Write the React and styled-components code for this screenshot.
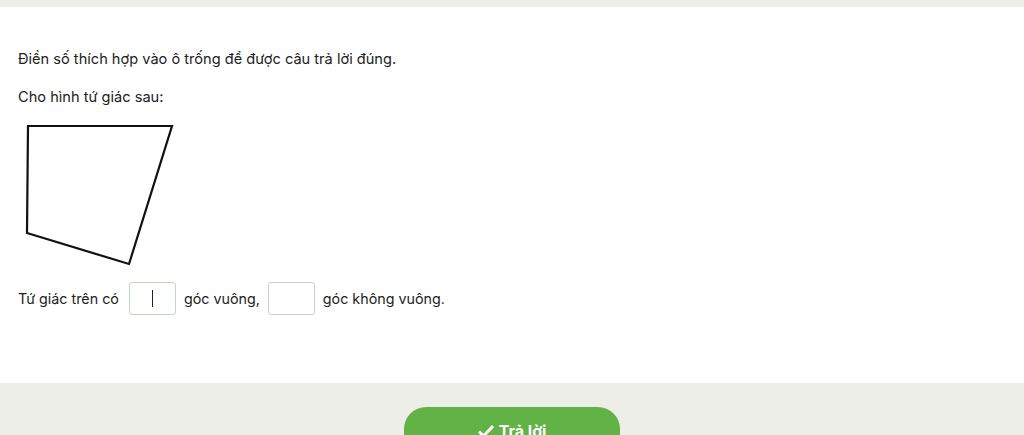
import React from "react";
import styled, { createGlobalStyle } from "styled-components";

const Global = createGlobalStyle`
  html, body {
    margin: 0;
    padding: 0;
    background: #eeeee8;
    font-family: Inter, "Noto Sans", Arial, sans-serif;
    color: #222;
  }
`;

const Page = styled.div`
  width: 1024px;
  height: 435px;
  overflow: hidden;
  padding-top: 7px;
  box-sizing: border-box;
`;

const Panel = styled.div`
  background: #fff;
  height: 376px;
  box-sizing: border-box;
  padding: 42px 18px 0;
`;

const Line = styled.p`
  margin: 0 0 ${(p) => p.gap || 0}px;
  font-size: 14.6px;
  line-height: 20px;
`;

const Figure = styled.svg`
  display: block;
  margin: 0 0 13px 7px;
`;

const AnswerRow = styled.div`
  display: flex;
  align-items: center;
  gap: 8px;
  font-size: 14.3px;
`;

const Lead = styled.span`
  margin-right: 2px;
`;

const Blank = styled.div`
  width: 47px;
  height: 33px;
  box-sizing: border-box;
  border: 1px solid ${(p) => (p.active ? "#b9d9c0" : "#cfcfcf")};
  border-radius: 3px;
  display: flex;
  align-items: center;
  justify-content: center;
`;

const Caret = styled.span`
  width: 1px;
  height: 17px;
  background: #222;
`;

const Footer = styled.div`
  display: flex;
  justify-content: center;
  padding-top: 24px;
`;

const SubmitButton = styled.button`
  width: 216px;
  height: 48px;
  border: none;
  border-radius: 22px;
  background: #62b346;
  color: #fff;
  font-family: inherit;
  font-size: 16px;
  font-weight: 700;
  display: flex;
  align-items: center;
  justify-content: center;
  gap: 5px;
  padding-bottom: 2px;
`;

export default function App() {
  return (
    <Page>
      <Global />
      <Panel>
        <Line gap={18}>Điền số thích hợp vào ô trống để được câu trả lời đúng.</Line>
        <Line gap={17}>Cho hình tứ giác sau:</Line>
        <Figure width="160" height="145" viewBox="0 0 160 145">
          <polygon
            points="3,2 147,2 104,140 2,109"
            fill="none"
            stroke="#111"
            strokeWidth="2.2"
            strokeLinejoin="miter"
          />
        </Figure>
        <AnswerRow>
          <Lead>Tứ giác trên có</Lead>
          <Blank active>
            <Caret />
          </Blank>
          <span>góc vuông,</span>
          <Blank />
          <span>góc không vuông.</span>
        </AnswerRow>
      </Panel>
      <Footer>
        <SubmitButton>
          <svg width="16" height="14" viewBox="0 0 16 14">
            <path d="M1 7.5 L5.5 12 L15 2" fill="none" stroke="#fff" strokeWidth="3" />
          </svg>
          Trả lời
        </SubmitButton>
      </Footer>
    </Page>
  );
}
